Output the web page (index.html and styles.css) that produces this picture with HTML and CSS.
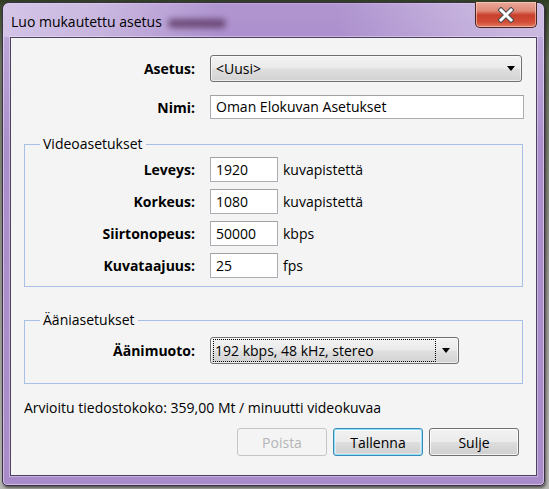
FILE: index.html
```html
<!DOCTYPE html>
<html lang="fi">
<head>
<meta charset="utf-8">
<title>Luo mukautettu asetus</title>
<link rel="stylesheet" href="styles.css">
</head>
<body>
<div class="window">
  <div class="titlebar">
    <span class="title">Luo mukautettu asetus</span>
    <span class="title-glow"></span>
    <button class="close" aria-label="Sulje">
      <svg width="22" height="16" viewBox="0 0 22 16">
        <path d="M6 3 L16 13 M16 3 L6 13" stroke="#4a4a52" stroke-width="5" stroke-linecap="square" fill="none"/>
        <path d="M6 3 L16 13 M16 3 L6 13" stroke="#ffffff" stroke-width="3" stroke-linecap="square" fill="none"/>
      </svg>
    </button>
  </div>
  <div class="client">
    <div class="form">
      <div class="row top-row first">
        <label class="lbl">Asetus:</label>
        <div class="combo wide"><span class="combo-text">&lt;Uusi&gt;</span><span class="arrow"></span></div>
      </div>
      <div class="row top-row second">
        <label class="lbl">Nimi:</label>
        <div class="field wide-field">Oman Elokuvan Asetukset</div>
      </div>

      <fieldset class="group video">
        <legend>Videoasetukset</legend>
        <div class="grow">
          <label class="lbl">Leveys:</label>
          <div class="field num">1920</div>
          <span class="unit">kuvapistettä</span>
        </div>
        <div class="grow">
          <label class="lbl">Korkeus:</label>
          <div class="field num">1080</div>
          <span class="unit">kuvapistettä</span>
        </div>
        <div class="grow">
          <label class="lbl">Siirtonopeus:</label>
          <div class="field num">50000</div>
          <span class="unit">kbps</span>
        </div>
        <div class="grow">
          <label class="lbl">Kuvataajuus:</label>
          <div class="field num">25</div>
          <span class="unit">fps</span>
        </div>
      </fieldset>

      <fieldset class="group audio">
        <legend>Ääniasetukset</legend>
        <div class="grow">
          <label class="lbl">Äänimuoto:</label>
          <div class="combo audio-combo"><span class="focus-rect">192 kbps, 48 kHz, stereo</span><span class="arrow"></span></div>
        </div>
      </fieldset>

      <p class="estimate">Arvioitu tiedostokoko: 359,00 Mt / minuutti videokuvaa</p>

      <div class="buttons">
        <button class="btn disabled">Poista</button>
        <button class="btn default">Tallenna</button>
        <button class="btn">Sulje</button>
      </div>
    </div>
  </div>
</div>
</body>
</html>
```

FILE: styles.css
```css
* { box-sizing: border-box; }

html, body {
  margin: 0;
  padding: 0;
}

body {
  width: 549px;
  height: 489px;
  overflow: hidden;
  font-family: "Open Sans", "Noto Sans", sans-serif;
  font-size: 14px;
  color: #000;
  background: linear-gradient(to bottom, #2e3d24 0, #3b4a2c 6px, #6c7260 60px, #9a9a94 300px, #b8b8b4 489px);
}

.window {
  position: relative;
  margin: 2px 4px 0 2px;
  width: 543px;
  height: 484px;
  border: 1px solid #3a2f45;
  border-radius: 7px 7px 5px 5px;
  background: linear-gradient(to bottom, #c9b6df 0px, #bca5d8 40px, #ab8fcc 140px, #a98bc9 484px);
  box-shadow: inset 0 0 0 1px rgba(255,255,255,0.45), 1px 2px 3px rgba(0,0,0,0.55);
  display: flex;
  flex-direction: column;
  padding: 0 7px 9px 7px;
}

.titlebar {
  height: 34px;
  display: flex;
  align-items: flex-start;
  margin: 0 -7px;
  padding: 9px 7px 0 8px;
  border-radius: 7px 7px 0 0;
  background: linear-gradient(to right, rgba(214,200,232,0.85) 0%, rgba(205,188,226,0.55) 18%, rgba(160,128,198,0.6) 40%, rgba(160,128,198,0.6) 62%, rgba(196,176,220,0.55) 85%, rgba(208,194,228,0.65) 100%);
}

.title {
  line-height: 20px;
  color: #000;
  white-space: nowrap;
}

.title-glow {
  display: inline-block;
  width: 58px;
  height: 9px;
  margin: 7px 0 0 6px;
  background: #5e3a66;
  border-radius: 5px;
  filter: blur(3px);
  opacity: 0.85;
}

.close {
  margin: -10px 0 0 auto;
  width: 62px;
  height: 26px;
  padding: 0;
  border: 1px solid #4a2420;
  border-top: none;
  border-radius: 0 0 5px 5px;
  background: linear-gradient(to bottom, #e9a89a 0%, #df8a78 35%, #c8402c 52%, #d24c36 80%, #e07a62 100%);
  box-shadow: inset 0 0 0 1px rgba(255,220,210,0.55);
  display: flex;
  align-items: center;
  justify-content: center;
}

.client {
  flex: 1;
  background: #f4f4f4;
  border: 1px solid #4e4060;
  box-shadow: 0 0 0 1px rgba(255,255,255,0.35);
}

.form {
  padding: 0 13px 0 13px;
}

.row {
  display: grid;
  grid-template-columns: 171px 1fr;
  column-gap: 15px;
  align-items: center;
}

.first { margin-top: 17px; }
.second { margin-top: 13px; }

.lbl {
  font-weight: bold;
  text-align: right;
  white-space: nowrap;
}

.combo {
  position: relative;
  height: 27px;
  border: 1px solid #707070;
  border-radius: 3px;
  background: linear-gradient(to bottom, #f3f3f3 0%, #ebebeb 45%, #dedede 55%, #d2d2d2 100%);
  box-shadow: inset 0 0 0 1px rgba(255,255,255,0.6);
  display: flex;
  align-items: center;
  padding: 0 6px 0 5px;
}

.combo-text {
  flex: 1;
  line-height: 20px;
}

.arrow {
  width: 0;
  height: 0;
  border-left: 4.5px solid transparent;
  border-right: 4.5px solid transparent;
  border-top: 5px solid #000;
  margin-left: auto;
}

.wide { margin-right: 1px; }

.field {
  height: 24px;
  background: #fff;
  border: 1px solid #abadb3;
  border-top-color: #a0a0a6;
  padding: 0 5px;
  line-height: 22px;
  white-space: nowrap;
}

.wide-field { margin-right: -1px; }

.group {
  margin: 16px 0 0 0;
  padding: 0 0 8px 0;
  border: 1px solid #a9c0e6;
  border-radius: 0;
  min-width: 0;
}

.group legend {
  margin-left: 15px;
  padding: 0 3px;
  line-height: 18px;
}

.grow {
  display: grid;
  grid-template-columns: 170px 68px auto;
  column-gap: 15px;
  align-items: center;
  margin-top: 7px;
}

.grow:first-of-type { margin-top: 4px; }

.grow .field { height: 25px; line-height: 23px; }

.unit {
  margin-left: -10px;
  white-space: nowrap;
}

.audio {
  margin-top: 24px;
  padding-bottom: 19px;
}

.audio .grow {
  grid-template-columns: 170px 249px;
  margin-top: 8px;
}

.audio-combo {
  padding: 0 4px 0 2px;
}

.focus-rect {
  width: 223px;
  height: 23px;
  border: 1px dotted #000;
  line-height: 21px;
  padding-left: 1px;
  white-space: nowrap;
}

.audio-combo .arrow {
  margin-right: 4px;
}

.estimate {
  margin: 14px 0 0 0;
  line-height: 20px;
}

.buttons {
  display: flex;
  justify-content: flex-end;
  gap: 6px;
  margin-top: 10px;
  padding-right: 4px;
}

.btn {
  width: 90px;
  height: 28px;
  font-family: inherit;
  font-size: 14px;
  color: #000;
  border: 1px solid #707070;
  border-radius: 3px;
  background: linear-gradient(to bottom, #f2f2f2 0%, #ebebeb 48%, #dddddd 52%, #cfcfcf 100%);
  box-shadow: inset 0 0 0 1px rgba(255,255,255,0.75);
  padding: 0;
}

.btn.default {
  border-color: #3c8ab8;
  box-shadow: inset 0 0 0 1px #8fe0f8, inset 0 0 0 2px rgba(255,255,255,0.4);
}

.btn.disabled {
  color: #b4b4b4;
  border-color: #c2c6c9;
  background: #f4f4f4;
  box-shadow: none;
}
```
